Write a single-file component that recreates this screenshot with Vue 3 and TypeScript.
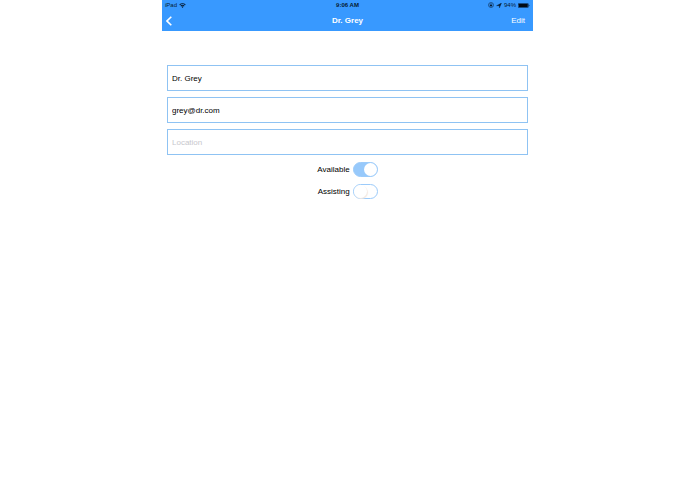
<script setup lang="ts">
import { reactive } from 'vue'

interface Doctor {
  name: string
  email: string
  location: string
  available: boolean
  assisting: boolean
}

const doctor = reactive<Doctor>({
  name: 'Dr. Grey',
  email: 'grey@dr.com',
  location: '',
  available: true,
  assisting: false,
})
</script>

<template>
  <main class="screen">
    <header class="top">
      <div class="status">
        <span class="carrier">
          iPad
          <svg class="wifi" viewBox="0 0 14 10" aria-hidden="true">
            <path d="M0.6 3.1a9.2 9.2 0 0 1 12.8 0l-1.3 1.5a7.4 7.4 0 0 0-10.2 0z" />
            <path d="M2.8 5.4a6 6 0 0 1 8.4 0l-1.3 1.4a4.2 4.2 0 0 0-5.8 0z" />
            <path d="M5 7.6a3 3 0 0 1 4 0l-2 2.2z" />
          </svg>
        </span>
        <time class="clock">9:06 AM</time>
        <span class="indicators">
          <svg class="lock" viewBox="0 0 12 12" aria-hidden="true">
            <circle cx="6" cy="6" r="5" fill="none" stroke="currentColor" stroke-width="1" />
            <path d="M3.7 5.5h4.6v3.2H3.7z" />
            <path d="M4.6 5.8V4.5a1.4 1.4 0 0 1 2.8 0v1.3" fill="none" stroke="currentColor" stroke-width=".8" />
          </svg>
          <svg class="arrow" viewBox="0 0 10 10" aria-hidden="true">
            <path d="M10 0 5.8 10V5.4H0z" stroke="currentColor" stroke-width=".6" />
          </svg>
          <span>94%</span>
          <svg class="battery" viewBox="0 0 24 10" aria-hidden="true">
            <rect x=".5" y=".5" width="20" height="9" rx="1.5" fill="none" stroke="currentColor" />
            <rect x="1.5" y="1.5" width="18" height="7" rx=".8" />
            <path d="M21.5 3a2.2 2.2 0 0 1 0 4z" />
          </svg>
        </span>
      </div>
      <nav class="bar">
        <button class="back" type="button" aria-label="Back">
          <svg viewBox="0 0 6 10" aria-hidden="true">
            <path d="M5.3.7 1 5l4.3 4.3" fill="none" stroke="currentColor" stroke-width="1.6" />
          </svg>
        </button>
        <h1>Dr. Grey</h1>
        <button class="edit" type="button">Edit</button>
      </nav>
    </header>

    <form class="form" @submit.prevent>
      <input v-model="doctor.name" class="field" type="text" aria-label="Name" />
      <input v-model="doctor.email" class="field" type="email" aria-label="Email" />
      <input v-model="doctor.location" class="field" type="text" placeholder="Location" aria-label="Location" />
      <div class="toggles">
        <label for="available">Available</label>
        <input id="available" v-model="doctor.available" class="switch" type="checkbox" role="switch" />
        <label for="assisting">Assisting</label>
        <input id="assisting" v-model="doctor.assisting" class="switch" type="checkbox" role="switch" />
      </div>
    </form>
  </main>
</template>

<style>
body {
  margin: 0;
  background: #fff;
}
</style>

<style scoped>
.screen {
  box-sizing: border-box;
  width: 100%;
  max-width: 371px;
  margin: 0 auto;
  color: #000;
  font: 8px/10px "Liberation Sans", Arial, sans-serif;
}

.top {
  background: #3899ff;
}

.status,
.bar {
  display: grid;
  grid-template-columns: 1fr auto 1fr;
  align-items: center;
}

.status {
  height: 10px;
  padding: 0 3px;
  color: #061a30;
  font-size: 6px;
}

.carrier,
.indicators {
  display: flex;
  align-items: center;
  gap: 2px;
}

.indicators {
  justify-content: flex-end;
}

.clock {
  font-weight: bold;
}

svg {
  display: block;
  fill: currentColor;
}

.wifi {
  width: 7px;
  height: 5px;
}

.lock {
  width: 6px;
  height: 6px;
}

.arrow {
  width: 6px;
  height: 5px;
}

.battery {
  width: 12px;
  height: 5px;
  color: #020a14;
}

.bar {
  height: 21px;
  padding: 0 4px;
  color: #fff;
}

h1 {
  margin: 0;
  font-size: 8px;
  line-height: 10px;
}

button {
  padding: 0;
  border: 0;
  background: none;
  color: inherit;
  font: inherit;
  cursor: pointer;
}

.back {
  justify-self: start;
}

.back svg {
  width: 6px;
  height: 10px;
}

.edit {
  justify-self: end;
  padding: 0 4px;
}

.form {
  display: flex;
  flex-direction: column;
  gap: 6px;
  padding: 34px 5px 0;
}

.field {
  box-sizing: border-box;
  width: 100%;
  height: 26px;
  margin: 0;
  padding: 0 4px;
  border: 1px solid #8fc3f3;
  border-radius: 0;
  outline: none;
  background: #fff;
  color: #000;
  font: inherit;
}

.field::placeholder {
  color: #c7c7cd;
  opacity: 1;
}

.toggles {
  display: grid;
  grid-template-columns: auto auto;
  justify-content: center;
  align-items: center;
  gap: 7px 3px;
  padding-top: 1px;
}

.toggles label {
  text-align: right;
}

.switch {
  appearance: none;
  display: flex;
  box-sizing: border-box;
  width: 25px;
  height: 15px;
  margin: 0;
  border: 1px solid #9ccbfa;
  border-radius: 8px;
  background: #fff;
  cursor: pointer;
}

.switch::before {
  content: "";
  width: 13px;
  height: 13px;
  border-radius: 50%;
  background: #fff;
  box-shadow: 1px 1px 1px #f3e9e2;
}

.switch:checked {
  justify-content: flex-end;
  background: #97c9fb;
}

.switch:checked::before {
  box-shadow: none;
}
</style>
